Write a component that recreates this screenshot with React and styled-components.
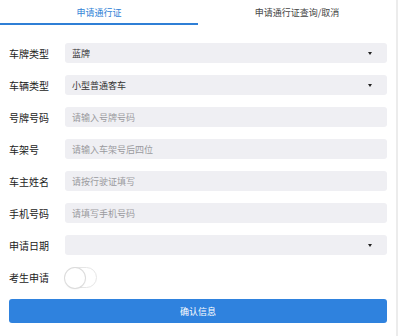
import React, { useState } from "react";
import styled, { createGlobalStyle } from "styled-components";

const Global = createGlobalStyle`
  html, body { margin: 0; padding: 0; background: #fff; }
  body { font-family: "Noto Sans CJK SC", "Noto Sans", sans-serif; }
  * { box-sizing: border-box; }
`;

const Page = styled.div`
  width: 398px;
  height: 336px;
  display: flex;
  background: #fff;
`;

const Main = styled.div`
  width: 396px;
  display: flex;
  flex-direction: column;
`;

const ScrollEdge = styled.div`
  width: 2px;
  background: #ececec;
`;

const Tabs = styled.div`
  display: grid;
  grid-template-columns: 1fr 1fr;
  height: 25px;
`;

const Tab = styled.div`
  display: flex;
  align-items: center;
  justify-content: center;
  font-size: 9px;
  color: ${(p) => (p.$active ? "#2f7fd6" : "#444")};
  border-bottom: 2px solid ${(p) => (p.$active ? "#2f7fd6" : "transparent")};
  padding-top: 1px;
`;

const Form = styled.div`
  display: flex;
  flex-direction: column;
  gap: 12px;
  padding: 18px 9px 0;
`;

const Row = styled.div`
  display: flex;
  align-items: center;
  height: ${(p) => p.$h || 20}px;
`;

const Label = styled.div`
  width: 56px;
  font-size: 10px;
  color: #222;
  white-space: nowrap;
`;

const Field = styled.div`
  flex: 1;
  height: 20px;
  background: #efeff3;
  border-radius: 3px;
  display: flex;
  align-items: center;
  justify-content: space-between;
  padding: 0 15px 0 7px;
  font-size: 9px;
  color: ${(p) => (p.$placeholder ? "#9a9a9e" : "#333")};
`;

const Caret = styled.span`
  width: 0;
  height: 0;
  border-left: 2.5px solid transparent;
  border-right: 2.5px solid transparent;
  border-top: 3px solid #222;
`;

const SwitchTrack = styled.button`
  width: 32px;
  height: 21px;
  border-radius: 11px;
  border: 1px solid #e6e6e6;
  background: #fff;
  padding: 0;
  display: flex;
  align-items: center;
  cursor: pointer;
`;

const Knob = styled.span`
  width: 20px;
  height: 20px;
  border-radius: 50%;
  background: #fff;
  box-shadow: 0 0 0 1px #dcdcdc, 0 1px 2px rgba(0,0,0,0.1);
  margin-left: -1px;
`;

const Submit = styled.button`
  height: 24px;
  border: none;
  border-radius: 3px;
  background: #2f82de;
  color: #fff;
  font-family: inherit;
  font-size: 9px;
  margin-top: -1px;
`;

const fields = [
  { label: "车牌类型", value: "蓝牌", select: true },
  { label: "车辆类型", value: "小型普通客车", select: true },
  { label: "号牌号码", value: "请输入号牌号码", ph: true },
  { label: "车架号", value: "请输入车架号后四位", ph: true },
  { label: "车主姓名", value: "请按行驶证填写", ph: true },
  { label: "手机号码", value: "请填写手机号码", ph: true },
  { label: "申请日期", value: "", select: true },
];

export default function App() {
  const [on, setOn] = useState(false);
  return (
    <>
      <Global />
      <Page>
        <Main>
          <Tabs>
            <Tab $active>申请通行证</Tab>
            <Tab>申请通行证查询/取消</Tab>
          </Tabs>
          <Form>
            {fields.map((f) => (
              <Row key={f.label}>
                <Label>{f.label}</Label>
                <Field $placeholder={f.ph}>
                  <span>{f.value}</span>
                  {f.select && <Caret />}
                </Field>
              </Row>
            ))}
            <Row $h={21}>
              <Label>考生申请</Label>
              <SwitchTrack onClick={() => setOn(!on)}>
                <Knob />
              </SwitchTrack>
            </Row>
            <Submit>确认信息</Submit>
          </Form>
        </Main>
        <ScrollEdge />
      </Page>
    </>
  );
}
